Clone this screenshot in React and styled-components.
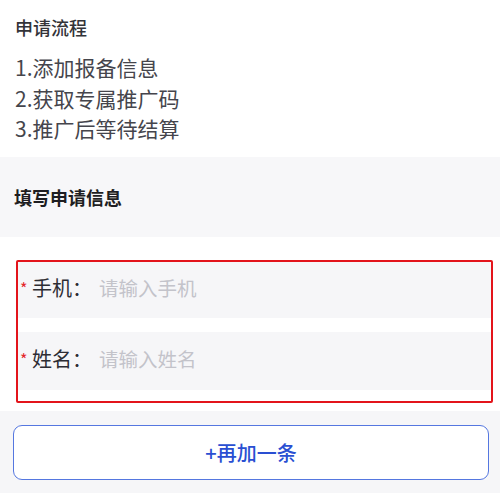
import React from 'react';
import styled, { createGlobalStyle } from 'styled-components';

const GlobalStyle = createGlobalStyle`
  html, body {
    margin: 0;
    padding: 0;
    background: #ffffff;
    font-family: "Noto Sans CJK SC", "Noto Sans", sans-serif;
  }
`;

const Page = styled.div`
  width: 500px;
  height: 493px;
  overflow: hidden;
  display: flex;
  flex-direction: column;
`;

const StepsSection = styled.section`
  background: #ffffff;
  height: 157px;
  box-sizing: border-box;
  padding: 14px 15px 0;
`;

const SectionTitle = styled.div`
  font-size: 18px;
  line-height: 26px;
  font-weight: 500;
  color: #333338;
`;

const StepList = styled.ol`
  list-style: none;
  margin: 12px 0 0;
  padding: 0;
`;

const Step = styled.li`
  font-size: 21px;
  line-height: 30.5px;
  color: #45454c;
`;

const FormHeader = styled.div`
  height: 80px;
  background: #f7f7f9;
  display: flex;
  align-items: center;
  padding: 0 14px;
  font-size: 18px;
  font-weight: 700;
  color: #1e1e22;
`;

const FormSection = styled.section`
  background: #ffffff;
  padding: 23px 7px 8px 16px;
`;

const FieldBox = styled.div`
  border: 2px solid #e3141b;
  border-radius: 2px;
  padding: 0 0 11px;
  display: flex;
  flex-direction: column;
  gap: 14px;
`;

const FieldRow = styled.div`
  height: ${p => p.h}px;
  box-sizing: border-box;
  background: #f6f6f8;
  display: flex;
  align-items: center;
  padding: 0 0 5px 2px;
  font-size: 20px;
`;

const Star = styled.span`
  color: #e3262b;
  font-size: 16px;
  width: 12px;
`;

const Label = styled.span`
  color: #2d2d33;
  width: 67px;
`;

const Placeholder = styled.span`
  color: #c3c3ca;
  font-size: 19.5px;
`;

const Footer = styled.div`
  flex: 1;
  background: #f6f6f8;
  padding: 14px 11px 0 13px;
`;

const AddButton = styled.button`
  width: 100%;
  height: 55px;
  box-sizing: border-box;
  background: #ffffff;
  border: 1.5px solid #5577e0;
  border-radius: 9px;
  color: #2a4fd2;
  font-family: inherit;
  font-size: 20px;
  font-weight: 500;
  display: flex;
  align-items: center;
  justify-content: center;
  cursor: pointer;
`;

const steps = ['1.添加报备信息', '2.获取专属推广码', '3.推广后等待结算'];

const fields = [
  { label: '手机', placeholder: '请输入手机', h: 56 },
  { label: '姓名', placeholder: '请输入姓名', h: 58 },
];

export default function App() {
  return (
    <Page>
      <GlobalStyle />
      <StepsSection>
        <SectionTitle>申请流程</SectionTitle>
        <StepList>
          {steps.map(s => (
            <Step key={s}>{s}</Step>
          ))}
        </StepList>
      </StepsSection>
      <FormHeader>填写申请信息</FormHeader>
      <FormSection>
        <FieldBox>
          {fields.map(f => (
            <FieldRow key={f.label} h={f.h}>
              <Star>*</Star>
              <Label>{f.label}：</Label>
              <Placeholder>{f.placeholder}</Placeholder>
            </FieldRow>
          ))}
        </FieldBox>
      </FormSection>
      <Footer>
        <AddButton>+再加一条</AddButton>
      </Footer>
    </Page>
  );
}
